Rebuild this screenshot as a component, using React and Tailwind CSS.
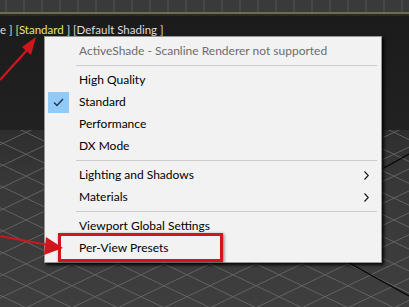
import React from "react";

const font = { fontFamily: 'Lato, "Noto Sans", sans-serif' };

function Viewport() {
  const lines = [];
  for (let i = -12; i < 14; i++) {
    const x0 = i * 46;
    lines.push(<line key={"a" + i} x1={x0} y1={120} x2={x0 + 420} y2={320} stroke="#6a6a6a" strokeWidth="1" />);
    lines.push(<line key={"b" + i} x1={x0 + 420} y1={120} x2={x0} y2={320} stroke="#6a6a6a" strokeWidth="1" />);
  }
  const ticks = [];
  for (let x = 6; x < 409; x += 18) {
    ticks.push(<line key={"t" + x} x1={x} y1={0} x2={x} y2={12} stroke="#555" strokeWidth="1" />);
  }
  return (
    <svg width="409" height="307" className="absolute left-0 top-0">
      <defs>
        <linearGradient id="sky" x1="0" y1="0" x2="0" y2="1">
          <stop offset="0" stopColor="#1a1a1a" />
          <stop offset="1" stopColor="#2c2c2c" />
        </linearGradient>
        <linearGradient id="floor" x1="0" y1="0" x2="0" y2="1">
          <stop offset="0" stopColor="#2e2e2e" />
          <stop offset="0.3" stopColor="#383838" />
          <stop offset="1" stopColor="#3e3e3e" />
        </linearGradient>
        <clipPath id="fl">
          <rect x="0" y="130" width="409" height="177" />
        </clipPath>
      </defs>
      <rect x="0" y="0" width="409" height="307" fill="url(#sky)" />
      <rect x="0" y="130" width="409" height="177" fill="url(#floor)" />
      <g clipPath="url(#fl)" opacity="0.85">{lines}</g>
      <line x1="340" y1="258" x2="409" y2="296" stroke="#050505" strokeWidth="1.3" />
      <line x1="384" y1="168" x2="409" y2="154" stroke="#050505" strokeWidth="1.3" />
      <rect x="0" y="0" width="409" height="13" fill="#3a3a3a" />
      {ticks}
      <rect x="0" y="12" width="409" height="2" fill="#6e6d4c" />
      <rect x="0" y="14" width="409" height="2" fill="#2a2a22" />
    </svg>
  );
}

function Sep() {
  return <div className="ml-[31px] mr-[4px] my-[3px] h-px bg-[#cccccc]" />;
}

function Item({ children, check, sub, disabled }) {
  return (
    <div className="relative flex h-[22px] items-center">
      <div className="flex w-[34px] shrink-0 items-center pl-[3px]">
        {check && (
          <div className="flex h-[21px] w-[21px] items-center justify-center bg-[#91c9f7]">
            <svg width="11" height="9" viewBox="0 0 11 9">
              <path d="M1 4.5 L4 7.5 L10 1" fill="none" stroke="#1f3554" strokeWidth="1.4" />
            </svg>
          </div>
        )}
      </div>
      <span className={"text-[12px] leading-none " + (disabled ? "text-[#6d6d6d]" : "text-black")}>{children}</span>
      {sub && (
        <svg className="absolute right-[12px] top-[7px]" width="5" height="9" viewBox="0 0 5 9">
          <path d="M0.5 0.5 L4.3 4.5 L0.5 8.5" fill="none" stroke="#111" strokeWidth="1.1" />
        </svg>
      )}
    </div>
  );
}

export default function App() {
  return (
    <div className="relative h-[307px] w-[409px] overflow-hidden bg-[#1c1c1c]" style={font}>
      <Viewport />
      <div className="absolute left-0 top-[22px] whitespace-pre text-[11.5px] leading-[16px] text-[#dcdcdc]">
        <span>{"e ] "}</span>
        <span className="text-[#e4e67c]">[Standard</span>
        <span>{" ] [Default Shading ]"}</span>
      </div>
      <div className="absolute left-[44px] top-[36px] w-[338px] border border-[#979797] bg-[#f2f2f2] py-[3px] shadow-[2px_2px_3px_rgba(0,0,0,0.9)]">
        <Item disabled>ActiveShade - Scanline Renderer not supported</Item>
        <Sep />
        <Item>High Quality</Item>
        <Item check>Standard</Item>
        <Item>Performance</Item>
        <Item>DX Mode</Item>
        <Sep />
        <Item sub>Lighting and Shadows</Item>
        <Item sub>Materials</Item>
        <Sep />
        <Item>Viewport Global Settings</Item>
        <Item>Per-View Presets</Item>
      </div>
      <div className="absolute left-[58px] top-[233px] h-[29px] w-[165px] border-[3px] border-[#d0161d] shadow-[1px_1px_3px_rgba(0,0,0,0.5)]" />
      <svg className="absolute left-0 top-0" width="409" height="307">
        <line x1="0" y1="80" x2="28" y2="49" stroke="#d0161d" strokeWidth="2.2" />
        <path d="M36 37 L22 47 L31 55 Z" fill="#d0161d" />
        <line x1="0" y1="236" x2="48" y2="245" stroke="#d0161d" strokeWidth="2.2" />
        <path d="M63 248 L46 237 L44 255 Z" fill="#d0161d" />
      </svg>
    </div>
  );
}
